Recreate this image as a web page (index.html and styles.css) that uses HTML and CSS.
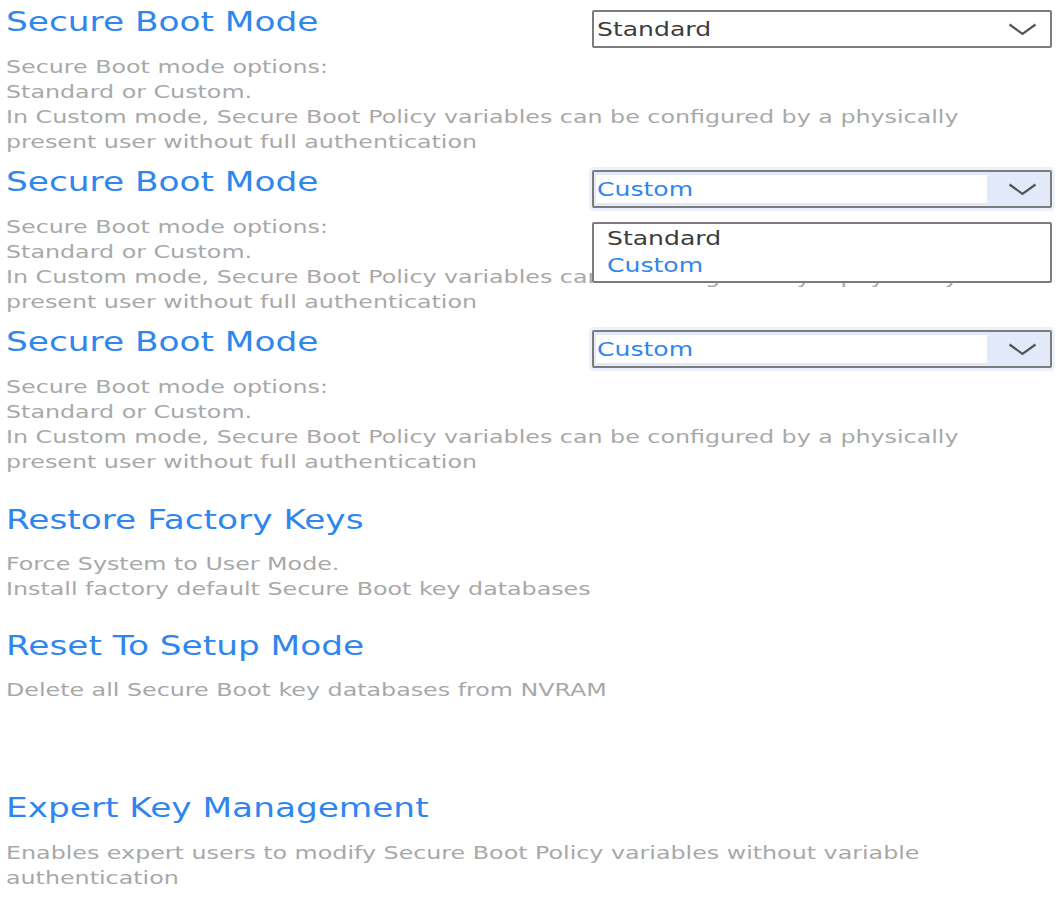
FILE: index.html
```html
<!DOCTYPE html>
<html lang="en">
<head>
<meta charset="utf-8">
<title>Secure Boot</title>
<link rel="stylesheet" href="styles.css">
</head>
<body>
<main class="page">
  <section class="setting">
    <div class="head">
      <h2 class="title"><span class="sx">Secure Boot Mode</span></h2>
      <div class="select">
        <div class="field"><span class="sx value">Standard</span></div>
        <div class="arrow"><svg width="29" height="13" viewBox="0 0 29 13"><polyline points="1.5,1.5 14.5,11 27.5,1.5" fill="none" stroke="#555" stroke-width="2.2"/></svg></div>
      </div>
    </div>
    <p class="desc">Secure Boot mode options:<br>Standard or Custom.<br>In Custom mode, Secure Boot Policy variables can be configured by a physically<br>present user without full authentication</p>
  </section>

  <section class="setting">
    <div class="head">
      <h2 class="title"><span class="sx">Secure Boot Mode</span></h2>
      <div class="select active">
        <div class="field"><span class="sx value blue">Custom</span></div>
        <div class="arrow"><svg width="29" height="13" viewBox="0 0 29 13"><polyline points="1.5,1.5 14.5,11 27.5,1.5" fill="none" stroke="#555" stroke-width="2.2"/></svg></div>
        <ul class="list">
          <li class="opt"><span class="sx">Standard</span></li>
          <li class="opt blue"><span class="sx">Custom</span></li>
        </ul>
      </div>
    </div>
    <p class="desc">Secure Boot mode options:<br>Standard or Custom.<br>In Custom mode, Secure Boot Policy variables can be configured by a physically<br>present user without full authentication</p>
  </section>

  <section class="setting">
    <div class="head">
      <h2 class="title"><span class="sx">Secure Boot Mode</span></h2>
      <div class="select active">
        <div class="field"><span class="sx value blue">Custom</span></div>
        <div class="arrow"><svg width="29" height="13" viewBox="0 0 29 13"><polyline points="1.5,1.5 14.5,11 27.5,1.5" fill="none" stroke="#555" stroke-width="2.2"/></svg></div>
      </div>
    </div>
    <p class="desc">Secure Boot mode options:<br>Standard or Custom.<br>In Custom mode, Secure Boot Policy variables can be configured by a physically<br>present user without full authentication</p>
  </section>

  <section class="action first">
    <h2 class="title"><span class="sx">Restore Factory Keys</span></h2>
    <p class="desc">Force System to User Mode.<br>Install factory default Secure Boot key databases</p>
  </section>

  <section class="action">
    <h2 class="title"><span class="sx">Reset To Setup Mode</span></h2>
    <p class="desc">Delete all Secure Boot key databases from NVRAM</p>
  </section>

  <section class="action far">
    <h2 class="title"><span class="sx">Expert Key Management</span></h2>
    <p class="desc">Enables expert users to modify Secure Boot Policy variables without variable<br>authentication</p>
  </section>
</main>
</body>
</html>
```

FILE: styles.css
```css
html, body {
  margin: 0;
  padding: 0;
  background: #ffffff;
  overflow: hidden;
}

body {
  font-family: "DejaVu Sans", "Noto Sans", sans-serif;
}

.page {
  padding: 6px 7px 0 6px;
}

.sx {
  display: inline-block;
  transform: scaleX(1.32);
  transform-origin: 0 50%;
  white-space: nowrap;
}

.title {
  margin: 0;
  font-size: 26px;
  line-height: 32px;
  font-weight: normal;
  color: #2f86ee;
  height: 32px;
}

.desc {
  margin: 0;
  width: max-content;
  font-size: 18px;
  line-height: 25px;
  color: #a8a8a8;
  white-space: nowrap;
  transform: scaleX(1.32);
  transform-origin: 0 0;
}

.setting {
  margin-bottom: 12px;
}

.head {
  display: flex;
  justify-content: space-between;
  align-items: flex-start;
  height: 42px;
  margin-bottom: 6px;
}

.select {
  position: relative;
  margin-top: 4px;
  width: 460px;
  height: 38px;
  box-sizing: border-box;
  border: 2px solid #7c7c7c;
  border-radius: 2px;
  background: #ffffff;
  display: flex;
}

.select.active {
  background: #e2e9f8;
  padding: 3px 0 3px 2px;
  box-shadow: 0 0 0 3px #edf1fa;
}

.field {
  flex: 1;
  display: flex;
  align-items: center;
  padding-left: 3px;
  background: #ffffff;
}

.select.active .field {
  padding-left: 1px;
}

.value {
  font-size: 19px;
  color: #3c3c3c;
}

.value.blue {
  color: #2f86ee;
}

.arrow {
  width: 42px;
  padding-left: 21px;
  display: flex;
  align-items: center;
}

.list {
  position: absolute;
  z-index: 10;
  left: -2px;
  right: -2px;
  top: calc(100% + 16px);
  margin: 0;
  padding: 1px 0 2px 13px;
  list-style: none;
  background: #ffffff;
  border: 2px solid #7c7c7c;
  border-radius: 2px;
}

.opt {
  font-size: 19px;
  line-height: 27px;
  color: #3c3c3c;
}

.opt.blue {
  color: #2f86ee;
}

.action {
  margin-top: 30px;
}

.action + .action {
  margin-top: 29px;
}

.action.far {
  margin-top: 90px;
}

.action .title {
  margin-bottom: 15px;
}

.action.far .title {
  margin-bottom: 16px;
}
```
